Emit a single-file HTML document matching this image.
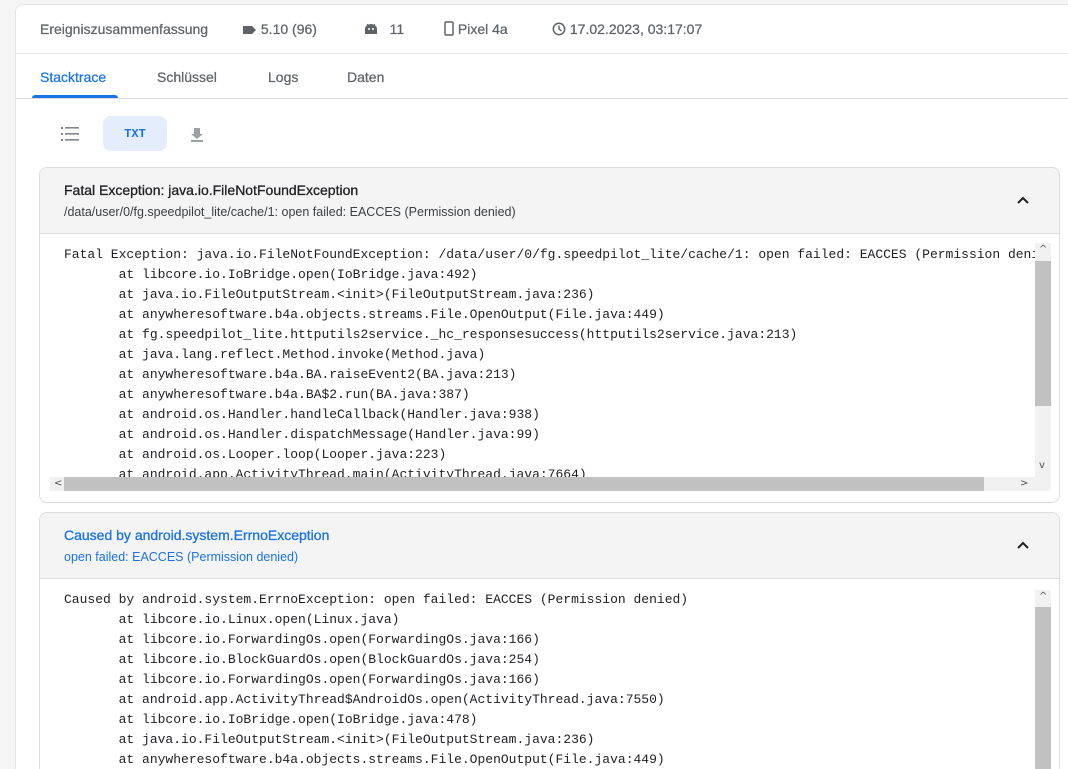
<!DOCTYPE html>
<html><head><meta charset="utf-8"><style>
*{margin:0;padding:0;box-sizing:border-box}
html,body{width:1068px;height:769px;overflow:hidden}
body{background:#f5f5f5;font-family:"Liberation Sans",sans-serif;position:relative}
.card{position:absolute;left:15px;top:4px;width:1053px;height:765px;background:#fff;border:1px solid #e3e3e3;border-bottom:none;border-right:none;border-radius:8px 0 0 0;overflow:hidden}
.hdr{position:absolute;top:0;left:0;right:0;height:49px;border-bottom:1px solid #e5e5e5;font-size:14px;color:#5f6368;-webkit-text-stroke:0.25px #5f6368}
.hdr span{position:absolute;top:16px;white-space:nowrap}
.tabs{position:absolute;top:49px;left:0;right:0;height:45px;border-bottom:1px solid #dadce0;font-size:14px;color:#5f6368;-webkit-text-stroke:0.25px #5f6368}
.tabs span{position:absolute;top:15px}
.ul{position:absolute;left:16px;top:41px;width:86px;height:3px;background:#1a73e8;border-radius:3px 3px 0 0}
.panel{position:absolute;left:39px;width:1021px;border:1px solid #dadce0;border-radius:8px;background:#fff;overflow:hidden}
.ph{height:66px;background:#f4f4f4;border-bottom:1px solid #dadce0;position:relative}
.ph .t{position:absolute;left:24px;top:14px;font-size:14px;color:#202124;-webkit-text-stroke:0.3px #202124}
.ph .s{position:absolute;left:24px;top:37px;font-size:12.5px;color:#3c4043}
.ph .chev{position:absolute;right:30px;top:28px}
.clip{position:absolute;left:0;top:0;width:995px;height:100%;overflow:hidden}
pre{position:absolute;left:24px;top:11px;font-family:"Liberation Mono",monospace;font-size:13px;line-height:20px;color:#202124;white-space:pre}
.code{position:relative;overflow:hidden}
.vs{position:absolute;left:995px;width:16px;background:#f1f1f1}
.arr{position:absolute;font-size:10px;color:#505050;font-family:"DejaVu Sans",sans-serif}
</style></head><body>
<div class="card">
<div class="hdr">
<span style="left:24px">Ereigniszusammenfassung</span>
<span style="left:227px"><svg width="14" height="10" style="vertical-align:-1px"><path d="M0 1h9l4 4-4 4H0z" fill="#5f6368"/></svg> 5.10 (96)</span>
<span style="left:348px"><svg width="14" height="12" style="vertical-align:-1px"><path d="M1 11V6a6 5 0 0 1 12 0v5z" fill="#5f6368"/><path d="M3 1l2 3M11 1 9 4" stroke="#5f6368"/><circle cx="5" cy="6" r="1" fill="#fff"/><circle cx="9" cy="6" r="1" fill="#fff"/></svg>&nbsp;&nbsp; 11</span>
<span style="left:428px"><svg width="10" height="15" style="vertical-align:-2px"><rect x="1" y="1" width="8" height="13" rx="1" fill="none" stroke="#5f6368" stroke-width="1.5"/></svg> Pixel 4a</span>
<span style="left:536px"><svg width="14" height="14" style="vertical-align:-2px"><circle cx="7" cy="7" r="5.7" fill="none" stroke="#5f6368" stroke-width="1.5"/><path d="M7 3.5V7l2.5 2" fill="none" stroke="#5f6368" stroke-width="1.4"/></svg> 17.02.2023, 03:17:07</span>
</div>
<div class="tabs">
<span style="left:24px;color:#1a73e8;-webkit-text-stroke:0.25px #1a73e8">Stacktrace</span>
<span style="left:141px">Schlüssel</span>
<span style="left:252px">Logs</span>
<span style="left:331px">Daten</span>
<div class="ul"></div>
</div>
<svg style="position:absolute;left:45px;top:121px" width="20" height="16"><g fill="#80868b"><rect x="0" y="1" width="2" height="2"/><rect x="0" y="7" width="2" height="2"/><rect x="0" y="13" width="2" height="2"/><rect x="4" y="1" width="14" height="1.6"/><rect x="4" y="7" width="14" height="1.6"/><rect x="4" y="13" width="14" height="1.6"/></g></svg>
<div style="position:absolute;left:87px;top:111px;width:64px;height:35px;background:#e3edfc;border-radius:8px;color:#1a73e8;font-family:'Liberation Mono',monospace;font-weight:bold;font-size:12px;text-align:center;line-height:37px">TXT</div>
<svg style="position:absolute;left:174px;top:123px" width="14" height="14"><path d="M4 0h6v6h3L7 11 1 6h3z" fill="#9aa0a6"/><rect x="1" y="12" width="12" height="2" fill="#9aa0a6"/></svg>
</div>

<div class="panel" style="top:167px;height:336px">
<div class="ph"><div class="t">Fatal Exception: java.io.FileNotFoundException</div><div class="s">/data/user/0/fg.speedpilot_lite/cache/1: open failed: EACCES (Permission denied)</div>
<svg class="chev" width="12" height="8"><path d="M1 7l5-5 5 5" fill="none" stroke="#202124" stroke-width="2"/></svg></div>
<div class="code" style="height:268px">
<div class="clip"><pre>Fatal Exception: java.io.FileNotFoundException: /data/user/0/fg.speedpilot_lite/cache/1: open failed: EACCES (Permission denied)
       at libcore.io.IoBridge.open(IoBridge.java:492)
       at java.io.FileOutputStream.&lt;init&gt;(FileOutputStream.java:236)
       at anywheresoftware.b4a.objects.streams.File.OpenOutput(File.java:449)
       at fg.speedpilot_lite.httputils2service._hc_responsesuccess(httputils2service.java:213)
       at java.lang.reflect.Method.invoke(Method.java)
       at anywheresoftware.b4a.BA.raiseEvent2(BA.java:213)
       at anywheresoftware.b4a.BA$2.run(BA.java:387)
       at android.os.Handler.handleCallback(Handler.java:938)
       at android.os.Handler.dispatchMessage(Handler.java:99)
       at android.os.Looper.loop(Looper.java:223)
       at android.app.ActivityThread.main(ActivityThread.java:7664)</pre></div>
<div style="position:absolute;left:10px;top:243px;width:985px;height:14px;background:#f1f1f1"></div>
<div style="position:absolute;left:24px;top:243px;width:920px;height:14px;background:#c1c1c1"></div>
<div class="arr" style="left:980px;top:244px">&gt;</div>
<div class="arr" style="left:14px;top:244px">&lt;</div>
<div class="vs" style="top:9px;height:248px"></div>
<div style="position:absolute;left:995px;top:27px;width:16px;height:145px;background:#c1c1c1"></div>
<div class="arr" style="left:999px;top:10px">^</div>
<div class="arr" style="left:999px;top:226px">v</div>
</div>
</div>

<div class="panel" style="top:512px;height:257px;border-bottom:none;border-radius:8px 8px 0 0">
<div class="ph"><div class="t" style="color:#1a73e8;-webkit-text-stroke:0.3px #1a73e8">Caused by android.system.ErrnoException</div><div class="s" style="color:#1a73e8">open failed: EACCES (Permission denied)</div>
<svg class="chev" width="12" height="8"><path d="M1 7l5-5 5 5" fill="none" stroke="#202124" stroke-width="2"/></svg></div>
<div class="code" style="height:190px">
<div class="clip"><pre>Caused by android.system.ErrnoException: open failed: EACCES (Permission denied)
       at libcore.io.Linux.open(Linux.java)
       at libcore.io.ForwardingOs.open(ForwardingOs.java:166)
       at libcore.io.BlockGuardOs.open(BlockGuardOs.java:254)
       at libcore.io.ForwardingOs.open(ForwardingOs.java:166)
       at android.app.ActivityThread$AndroidOs.open(ActivityThread.java:7550)
       at libcore.io.IoBridge.open(IoBridge.java:478)
       at java.io.FileOutputStream.&lt;init&gt;(FileOutputStream.java:236)
       at anywheresoftware.b4a.objects.streams.File.OpenOutput(File.java:449)</pre></div>
<div class="vs" style="top:11px;height:179px"></div>
<div style="position:absolute;left:995px;top:28px;width:16px;height:162px;background:#c1c1c1"></div>
<div class="arr" style="left:999px;top:12px">^</div>
</div>
</div>
</body></html>
